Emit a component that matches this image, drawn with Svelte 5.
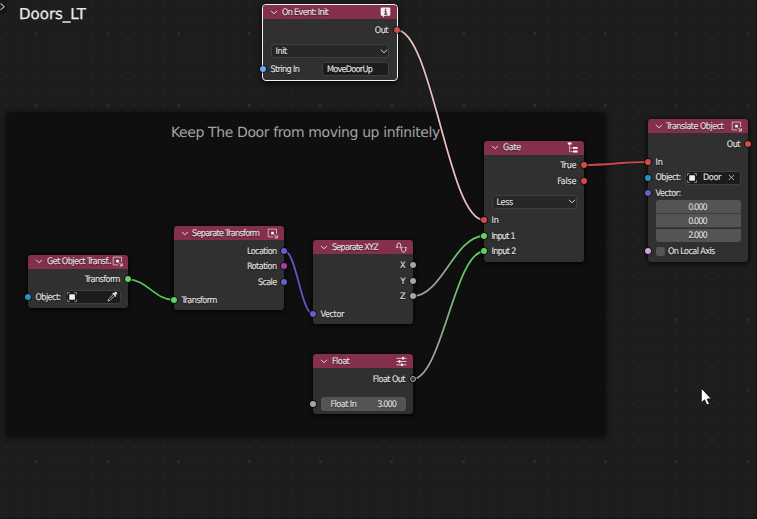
<script>
  const dots = Array.from({ length: 56 }, (_, i) => i);
  const gx = (i) => Math.round(6.9 + i * 14.24);
  const gy = (i) => Math.round(4.9 + i * 14.26);

  const red = '#d14b4b', green = '#63cf63', violet = '#6560c8', grey = '#a5a5a5';

  // cy: vertical centre of a row; w: label width
  const nodes = [
    { title: 'On Event: Init', tw: 46, tx: 19, icon: 'info', x: 263, y: 5, w: 133.5, h: 74.5, head: 14, active: true, rows: [
      { cy: 30, out: 'Out', w: 13, color: red },
      { cy: 51.3, select: 'Init', w: 11 },
      { cy: 69, label: 'String In', w: 28.5, color: '#6ca6f5', text: 'MoveDoorUp', vw: 45, fw: 67 }
    ] },
    { title: 'Gate', tw: 17.5, tx: 19, icon: 'tree', x: 484, y: 141, w: 99.5, h: 121, head: 13.5, rows: [
      { cy: 165.2, out: 'True', w: 15.5, color: red },
      { cy: 181.1, out: 'False', w: 18.5, color: red },
      { cy: 202, select: 'Less', w: 16 },
      { cy: 220.1, label: 'In', w: 6.5, color: red },
      { cy: 236, label: 'Input 1', w: 23.3, color: green },
      { cy: 251.5, label: 'Input 2', w: 24, color: green }
    ] },
    { title: 'Translate Object', tw: 57, tx: 18, icon: 'object', x: 648, y: 119, w: 99.5, h: 143, head: 14, rows: [
      { cy: 144, out: 'Out', w: 13, color: red },
      { cy: 162, label: 'In', w: 6.5, color: red },
      { cy: 177.5, label: 'Object:', w: 25, color: '#2c8fc4', object: 'Door', vw: 17.5, fw: 56 },
      { cy: 193, label: 'Vector:', w: 25, color: violet },
      { cy: 207.3, number: '0.000', vw: 18.5, pos: 'first' },
      { cy: 221.3, number: '0.000', vw: 18.5, pos: 'mid' },
      { cy: 235.3, number: '2.000', vw: 18.5, pos: 'last' },
      { cy: 251.4, check: 'On Local Axis', w: 46.5, color: '#cda4d8' }
    ] },
    { title: 'Separate Transform', tw: 67, tx: 18, icon: 'object', x: 174, y: 226, w: 110.2, h: 84, head: 14, rows: [
      { cy: 251, out: 'Location', w: 29.5, color: violet },
      { cy: 266.4, out: 'Rotation', w: 29.5, color: '#b03aa5' },
      { cy: 282.1, out: 'Scale', w: 18.5, color: violet },
      { cy: 300, label: 'Transform', w: 35, color: green }
    ] },
    { title: 'Get Object Transf..', tw: 64, tx: 19, icon: 'object', x: 28, y: 255, w: 99.5, h: 52.5, head: 13.5, rows: [
      { cy: 279.3, out: 'Transform', w: 35, color: green },
      { cy: 297, label: 'Object:', w: 25, color: '#2c8fc4', object: '', fw: 56 }
    ] },
    { title: 'Separate XYZ', tw: 46, tx: 19, icon: 'wave', x: 313, y: 240.3, w: 99.5, h: 84.2, head: 13.7, rows: [
      { cy: 265.1, out: 'X', w: 5.5, color: grey },
      { cy: 280.9, out: 'Y', w: 5.5, color: grey },
      { cy: 296.3, out: 'Z', w: 5.5, color: grey },
      { cy: 314.2, label: 'Vector', w: 23, color: violet }
    ] },
    { title: 'Float', tw: 17, tx: 19, icon: 'sliders', x: 313, y: 354.3, w: 99.5, h: 59.7, head: 13.7, rows: [
      { cy: 379.1, out: 'Float Out', w: 32, color: grey, ring: true },
      { cy: 404.1, slider: 'Float In', w: 25.5, number: '3.000', vw: 19, color: grey }
    ] }
  ];

  const ROW = 14;
  const gap = (n, i) =>
    n.rows[i].cy - ROW / 2 - (i ? n.rows[i - 1].cy + ROW / 2 : n.y + n.head);

  const link = (x1, y1, x2, y2, c) => {
    const h = (x2 - x1) * 0.41;
    return { d: `M${x1} ${y1}C${x1 + h} ${y1} ${x2 - h} ${y2} ${x2} ${y2}`, c };
  };
  const wires = [
    link(396.5, 30, 484, 220, '#e6bcbc'),
    link(583.5, 165, 648, 162, '#c84a4a'),
    link(127.5, 279.3, 174, 300, '#5cc05f'),
    link(284.5, 251, 313, 314, '#615dbe'),
    link(412.5, 296.3, 484, 236, 'url(#mix)'),
    link(412.5, 379, 484, 251.5, 'url(#mix)')
  ];

  // Adjusts the tracking so that a label takes its given width.
  function fit(el, width) {
    const n = el.textContent.length;
    if (n < 2) return;
    const natural = el.getBoundingClientRect().width;
    const extra = (width + 0.8 - natural) / (n - 1);
    el.style.letterSpacing = extra + 'px';
    el.style.marginRight = -extra + 'px';
  }
</script>

{#snippet chevron()}
  <svg width="8" height="5" viewBox="0 0 8 5"><path d="M1 .8 4 3.8 7 .8" fill="none" stroke="#dedede" stroke-width="1" /></svg>
{/snippet}

{#snippet icon(kind)}
  <svg class="icon" width="11" height="11" viewBox="0 0 11 11" fill="none" stroke="#e6d5da">
    {#if kind === 'info'}
      <path d="M1.5.6h8q.8 0 .8.8v6.5q0 .8-.8.8H4.8L3 10.6 2.9 8.7H1.5q-.8 0-.8-.8V1.4Q.7.6 1.5.6Z" fill="#f0f0f0" stroke="none" />
      <path d="M5.6 1.7v1.2M4.5 4.2h1.3v2.9M4.3 7.2h2.9" stroke="#522334" stroke-width="1.2" />
    {:else if kind === 'object'}
      <path d="M9.5 6V1.1H1.2v7.8h5" stroke-width=".9" opacity=".85" />
      <rect x="4.2" y="3.8" width="2.6" height="2.6" fill="#fff" stroke="none" />
      <path d="M7.2 6.7 9.9 9.5M10.3 7.3v2.6H7.7" stroke-width="1" />
    {:else if kind === 'tree'}
      <path d="M2.5 2.5v7.1h3.4M2.5 6h3.4" stroke-width=".9" stroke-dasharray="1.3 .4" />
      <path d="M.8 1.5h3.8M6 5.9h4.6M6 9.5h4.6" stroke="#fff" stroke-width="1.8" />
    {:else if kind === 'wave'}
      <path d="M.8 6.2V4.6C1 2.4 1.6.9 2.9.9s1.9 1.5 2.1 4.2.5 5 2.5 5 2.5-1.5 2.5-3.6V5M.8 5.3h1.5M3.5 5.3H5M6.3 5.5h1M8.6 5.5H10" stroke-width="1" />
    {:else}
      <path d="M.5 2.3h10M.5 5.5h10M.5 8.8h10" stroke-width=".9" />
      <path d="M7 1.1v2.4M3.5 4.3v2.4M6 7.6V10" stroke="#fff" stroke-width="1.7" />
    {/if}
  </svg>
{/snippet}

{#snippet cube()}
  <svg class="cube" width="10" height="10" viewBox="0 0 10 10"><rect x="2.3" y="2.3" width="5.6" height="5.4" fill="#f0f0f0" /><path d="M.5 2.8V.5h2.3M7.2.5h2.3v2.3M9.5 7.2v2.3H7.2M2.8 9.5H.5V7.2" fill="none" stroke="#999" stroke-width=".8" /></svg>
{/snippet}

<main class="editor">
  <svg class="grid" width="757" height="519">
    {#each dots as i}
      {#each dots.slice(0, 38) as j}
        {#if i % 5 === 2 && j % 5 === 2}
          <rect x={gx(i) - 1} y={gy(j) - 1} width="3" height="3" fill="#2b2b2b" />
        {:else}
          <rect x={gx(i) - 1} y={gy(j) - 1} width="2" height="2" fill="#252525" />
        {/if}
      {/each}
    {/each}
  </svg>

  <section class="frame"><span use:fit={268.5}>Keep The Door from moving up infinitely</span></section>

  <svg class="wires" width="757" height="519" fill="none">
    <defs>
      <linearGradient id="mix" gradientUnits="userSpaceOnUse" x1="412" y1="0" x2="484" y2="0">
        <stop offset="0.3" stop-color="#a0a0a0" /><stop offset="0.75" stop-color="#60c963" />
      </linearGradient>
    </defs>
    {#each wires as wire}
      <path d={wire.d} stroke="#080808" stroke-opacity=".65" stroke-width="3.2" />
      <path d={wire.d} stroke={wire.c} stroke-width="1.8" />
    {/each}
  </svg>

  {#each nodes as n}
    <article class="node" class:active={n.active} style="left:{n.x}px;top:{n.y}px;width:{n.w}px;height:{n.h}px">
      <header style="height:{n.head}px">
        <div class="title" style="width:{n.tx - 7}px">{@render chevron()}</div>
        <span use:fit={n.tw}>{n.title}</span>
        {@render icon(n.icon)}
      </header>
      {#each n.rows as r, i}
        <div class="row" class:right={r.out} style="margin-top:{gap(n, i)}px">
          {#if r.color}
            <i class="socket" class:end={r.out} class:ring={r.ring} style="background-color:{r.ring ? '#303030' : r.color}"></i>
          {/if}
          {#if r.out}
            <span use:fit={r.w}>{r.out}</span>
          {:else if r.select}
            <div class="select"><span use:fit={r.w}>{r.select}</span>{@render chevron()}</div>
          {:else if r.slider}
            <div class="number slider"><span use:fit={r.w}>{r.slider}</span><span use:fit={r.vw}>{r.number}</span></div>
          {:else if r.number}
            <div class="number {r.pos}"><span use:fit={r.vw}>{r.number}</span></div>
          {:else if r.check}
            <b class="box"></b><span use:fit={r.w}>{r.check}</span>
          {:else}
            <span use:fit={r.w}>{r.label}</span>
            {#if r.text}
              <div class="field" style="width:{r.fw}px"><span use:fit={r.vw}>{r.text}</span></div>
            {:else if r.fw}
              <div class="field object" style="width:{r.fw}px">
                {@render cube()}
                {#if r.object}
                  <span use:fit={r.vw}>{r.object}</span>
                  <svg class="tail" width="7" height="7" viewBox="0 0 7 7"><path d="m.8.8 5.2 5.2M6 .8.8 6" stroke="#bdbdbd" stroke-width=".9" /></svg>
                {:else}
                  <svg class="tail dropper" width="11" height="11" viewBox="0 0 11 11"><path d="M6.3 3.4 1.5 8.1 1 10l1.9-.5 4.7-4.8" fill="none" stroke="#c8c8c8" stroke-width=".9" /><path d="m5.2 2.4 3.4 3.5.8-.8-.8-.8 1.3-1.2Q10.8 2.2 9.9 1.2T7.8 1L6.7 2.3 6 1.6Z" fill="#d6d6d6" /></svg>
                {/if}
              </div>
            {/if}
          {/if}
        </div>
      {/each}
    </article>
  {/each}

  <h1><span use:fit={66}>Doors_LT</span></h1>
  <svg class="toggle" width="8" height="14" viewBox="0 0 8 14"><path d="M0 0h4q3 0 3 3v8q0 3-3 3H0Z" fill="#171717" /><path d="m.5 3.5 3.7 3.2L.5 9.8" fill="none" stroke="#b4b4b4" stroke-width="1.1" /></svg>
  <svg class="cursor" width="13" height="20" viewBox="0 0 13 20"><path d="M1.2 1v15l3.3-3.1 2.4 5.2 2.6-1.2L7.2 12h4.3Z" fill="#fff" stroke="#111" stroke-width="1" /></svg>
</main>

<style>
  :global(body) { background: #1d1d1d; overflow: hidden; }
  .editor {
    position: relative;
    box-sizing: border-box;
    width: 757px;
    height: 519px;
    overflow: hidden;
    background: #1d1d1d;
    border-right: 1px solid #151515;
    border-bottom: 1px solid #151515;
    color: #e2e2e2;
    font: 14.5px/20px 'DejaVu Sans', sans-serif;
    text-rendering: geometricPrecision;
  }
  svg { display: block; flex: none; }
  span { white-space: pre; flex: none; }
  .node span { padding-top: 1.4px; -webkit-text-stroke: 0.12px #e2e2e2; }
  .grid, .wires { position: absolute; left: 0; top: 0; }
  .frame {
    position: absolute;
    left: 6px;
    top: 111.5px;
    width: 599.5px;
    height: 325px;
    box-sizing: border-box;
    padding: 11px 0 0 165px;
    border-radius: 4px;
    background: rgba(14, 14, 14, 0.97);
    box-shadow: 0 1px 7px rgba(0, 0, 0, 0.6);
    color: #a3a3a3;
    font-size: 14px;
    line-height: 20px;
  }
  .node {
    position: absolute;
    display: flex;
    flex-direction: column;
    border-radius: 3.5px;
    background: #303030;
    box-shadow: 0 1px 5px 1px rgba(0, 0, 0, 0.75);
    font: 9px/14px 'DejaVu Sans Condensed', 'DejaVu Sans', sans-serif;
    font-stretch: condensed;
    text-shadow: 0 1px 1px rgba(0, 0, 0, 0.6);
  }
  .active { box-shadow: 0 0 0 1px #f2f2f2, 0 2px 7px 1px rgba(0, 0, 0, 0.8); }
  header {
    display: flex;
    align-items: center;
    flex: none;
    box-sizing: border-box;
    padding: 0 6px 0 7px;
    border-radius: 3.5px 3.5px 0 0;
    background: #84304c;
  }
  .title { flex: none; }
  .icon { margin-left: auto; }
  .row {
    position: relative;
    display: flex;
    align-items: center;
    flex: none;
    height: 14px;
    padding: 0 7px 0 7.5px;
  }
  .active .row { padding-right: 8px; }
  .right { justify-content: flex-end; }
  .socket {
    position: absolute;
    left: -3px;
    top: 4px;
    width: 6px;
    height: 6px;
    border-radius: 50%;
    box-shadow: 0 0 0 0.8px rgba(0, 0, 0, 0.75);
  }
  .end { left: auto; right: -3px; }
  .ring { box-sizing: border-box; border: 1.4px solid #b0b0b0; }
  .select, .field, .number {
    display: flex;
    align-items: center;
    box-sizing: border-box;
    height: 14px;
    border: 1px solid #3f3f3f;
    border-radius: 3px;
    background: #272727;
  }
  .select { flex: 1; justify-content: space-between; padding: 0 0 0 4px; }
  .field { margin-left: auto; padding-left: 4.5px; background: #1c1c1c; }
  .object { padding: 0 4.5px 0 1.5px; }
  .cube { margin-right: 6px; }
  .tail { margin-left: auto; }
  .dropper { margin-right: -2.5px; }
  .number { flex: 1; justify-content: center; height: 13.5px; border: 0; background: #545454; }
  .first { border-radius: 3px 3px 0 0; }
  .mid { border-radius: 0; }
  .last { border-radius: 0 0 3px 3px; }
  .first, .mid { border-bottom: 1px solid #3c3c3c; height: 14px; }
  .slider { justify-content: space-between; padding: 0 8.5px 0 10px; }
  .box { width: 9.5px; height: 9.5px; margin-right: 3px; border-radius: 2px; background: #545454; }
  h1 {
    position: absolute;
    left: 19px;
    top: 4px;
    margin: 0;
    color: #e9e9e9;
    -webkit-text-stroke: 0.25px #e9e9e9;
    font-size: 15px;
    font-weight: 400;
    line-height: 20px;
  }
  .toggle { position: absolute; left: 0; top: 0; }
  .cursor { position: absolute; left: 700px; top: 387px; }
</style>
